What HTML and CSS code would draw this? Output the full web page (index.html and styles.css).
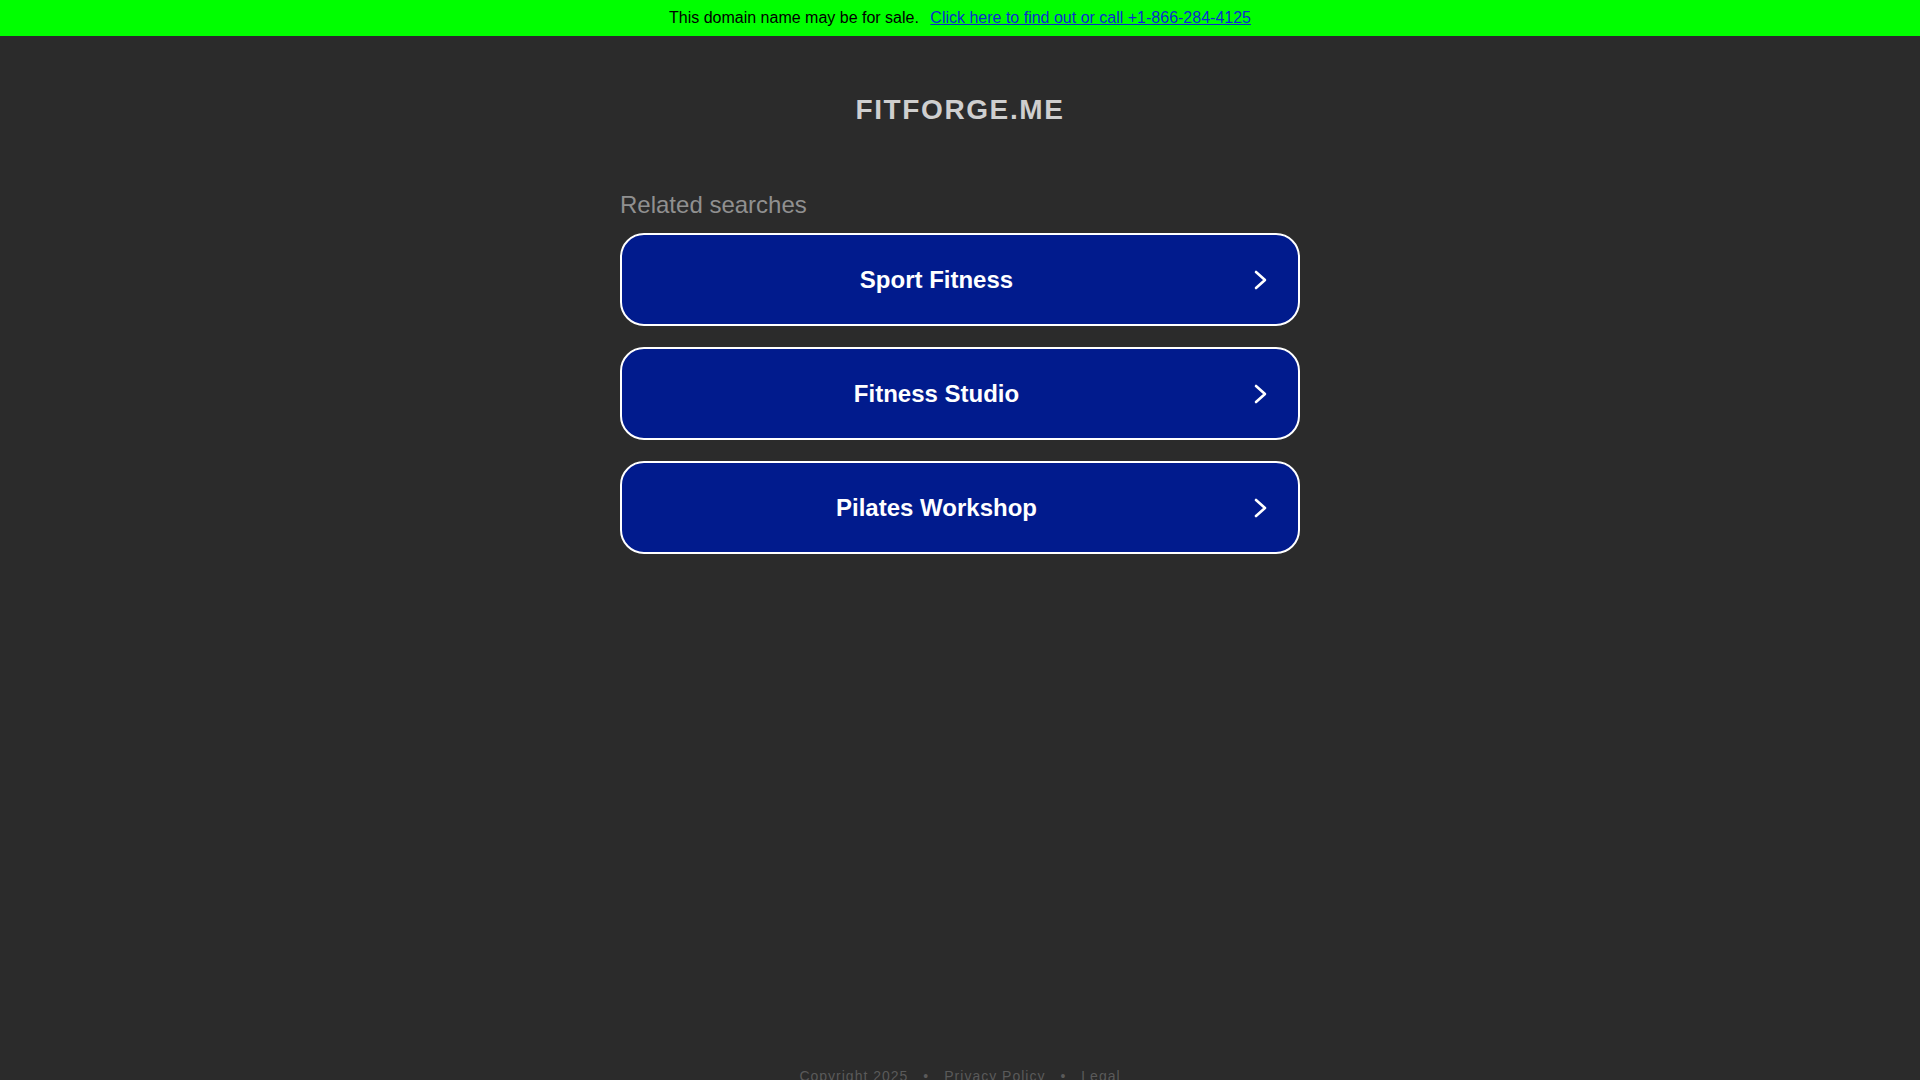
FILE: index.html
```html
<!DOCTYPE html>
<html lang="en">
<head>
<meta charset="utf-8">
<title>fitforge.me</title>
<link rel="stylesheet" href="styles.css">
</head>
<body>
<div class="page">
  <div class="banner">
    <span class="banner-text">This domain name may be for sale.</span>
    <a class="banner-link" href="#">Click here to find out or call +1-866-284-4125</a>
  </div>
  <main class="content">
    <h1 class="domain">FITFORGE.ME</h1>
    <section class="searches">
      <h2 class="searches-title">Related searches</h2>
      <ul class="search-list">
        <li>
          <a class="search-btn" href="#">
            <span class="search-label">Sport Fitness</span>
            <svg class="chevron" width="16" height="22" viewBox="0 0 16 22"><polyline points="3,3 12,11 3,19" fill="none" stroke="#ffffff" stroke-width="2.6" stroke-linecap="round" stroke-linejoin="round"/></svg>
          </a>
        </li>
        <li>
          <a class="search-btn" href="#">
            <span class="search-label">Fitness Studio</span>
            <svg class="chevron" width="16" height="22" viewBox="0 0 16 22"><polyline points="3,3 12,11 3,19" fill="none" stroke="#ffffff" stroke-width="2.6" stroke-linecap="round" stroke-linejoin="round"/></svg>
          </a>
        </li>
        <li>
          <a class="search-btn" href="#">
            <span class="search-label">Pilates Workshop</span>
            <svg class="chevron" width="16" height="22" viewBox="0 0 16 22"><polyline points="3,3 12,11 3,19" fill="none" stroke="#ffffff" stroke-width="2.6" stroke-linecap="round" stroke-linejoin="round"/></svg>
          </a>
        </li>
      </ul>
    </section>
  </main>
  <footer class="footer">
    <span class="foot-item">Copyright 2025</span>
    <span class="sep">•</span>
    <a class="foot-item" href="#">Privacy Policy</a>
    <span class="sep">•</span>
    <a class="foot-item" href="#">Legal</a>
  </footer>
</div>
</body>
</html>
```
FILE: styles.css
```css
html {
  overflow: hidden;
}

html, body {
  margin: 0;
  padding: 0;
  background: #2b2b2b;
}

body {
  font-family: "Liberation Sans", Arial, Helvetica, sans-serif;
}

.page {
  display: flex;
  flex-direction: column;
}

.banner {
  height: 36px;
  line-height: 36px;
  background: #00ff00;
  color: #000000;
  font-size: 16px;
  text-align: center;
}

.banner-link {
  color: #0c2bd2;
  text-decoration: underline;
  margin-left: 7px;
}

.content {
  width: 680px;
  margin: 0 auto;
}

.domain {
  margin: 58px 0 0;
  font-size: 28px;
  line-height: 32px;
  font-weight: bold;
  letter-spacing: 1.6px;
  color: #cfcfcf;
  text-align: center;
}

.searches {
  margin-top: 65px;
}

.searches-title {
  margin: 0 0 14px;
  font-size: 24px;
  line-height: 28px;
  font-weight: normal;
  color: #909090;
}

.search-list {
  list-style: none;
  margin: 0;
  padding: 0;
  display: flex;
  flex-direction: column;
  gap: 21px;
}

.search-btn {
  box-sizing: border-box;
  height: 93px;
  display: flex;
  align-items: center;
  padding: 0 29px 0 0;
  background: #011b8d;
  border: 2px solid #ffffff;
  border-radius: 24px;
  text-decoration: none;
  color: #ffffff;
}

.search-label {
  flex: 1;
  text-align: center;
  font-size: 24px;
  font-weight: bold;
}

.chevron {
  display: block;
  margin-left: 2px;
  flex: none;
}

.footer {
  margin-top: 514px;
  display: flex;
  justify-content: center;
  align-items: baseline;
  gap: 15px;
  line-height: 16px;
  font-size: 14px;
  letter-spacing: 1px;
  color: #5a5a5a;
}

.foot-item {
  color: #5a5a5a;
  text-decoration: none;
}

.sep {
  color: #5a5a5a;
}
```
